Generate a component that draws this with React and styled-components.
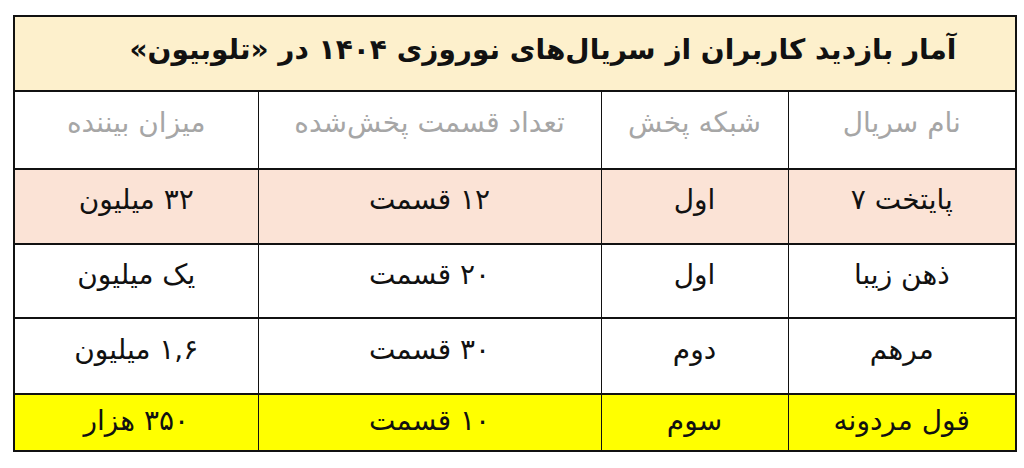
import React from 'react'
import styled, { createGlobalStyle } from 'styled-components'

const Global = createGlobalStyle`
  html, body {
    margin: 0;
    padding: 0;
    background: #ffffff;
  }
  body {
    font-family: "DejaVu Sans", "Noto Sans", sans-serif;
  }
`

const Page = styled.div`
  padding: 15px 7px 0 15px;
  direction: rtl;
`

const Table = styled.table`
  width: 1002px;
  border-collapse: collapse;
  table-layout: fixed;
  border: 2px solid #111;
`

const TitleCell = styled.th`
  box-sizing: border-box;
  height: 75px;
  background: #fdf0cc;
  border-bottom: 2px solid #111;
  font-size: 28px;
  font-weight: bold;
  color: #111;
  text-align: center;
  padding: 0 0 8px 56px;
`

const HeadCell = styled.th`
  box-sizing: border-box;
  height: 78px;
  font-size: 28px;
  font-weight: normal;
  color: #a6a6a6;
  border-left: 1.5px solid #111;
  border-bottom: 2px solid #111;
  text-align: center;
  vertical-align: middle;
  padding: 0 0 16px 0;
`

const Row = styled.tr`
  background: ${p => p.$bg || '#ffffff'};
`

const Cell = styled.td`
  box-sizing: border-box;
  height: ${p => p.$h || 75}px;
  font-size: 28px;
  color: #111;
  border-left: 1.5px solid #111;
  border-bottom: 2px solid #111;
  text-align: center;
  vertical-align: middle;
  padding: 0 0 ${p => p.$pb ?? 14}px 0;
`

const rows = [
  { name: 'پایتخت ۷', net: 'اول', count: '۱۲ قسمت', view: '۳۲ میلیون', bg: '#fbe3d6', h: 75 },
  { name: 'ذهن زیبا', net: 'اول', count: '۲۰ قسمت', view: 'یک میلیون', h: 74 },
  { name: 'مرهم', net: 'دوم', count: '۳۰ قسمت', view: '۱,۶ میلیون', h: 76 },
  { name: 'قول مردونه', net: 'سوم', count: '۱۰ قسمت', view: '۳۵۰ هزار', bg: '#ffff00', h: 57, pb: 4 },
]

export default function App() {
  return (
    <Page>
      <Global />
      <Table>
        <colgroup>
          <col style={{ width: 228 }} />
          <col style={{ width: 187 }} />
          <col style={{ width: 343 }} />
          <col style={{ width: 244 }} />
        </colgroup>
        <thead>
          <tr>
            <TitleCell colSpan={4}>آمار بازدید کاربران از سریال‌های نوروزی ۱۴۰۴ در «تلوبیون»</TitleCell>
          </tr>
          <tr>
            <HeadCell>نام سریال</HeadCell>
            <HeadCell>شبکه پخش</HeadCell>
            <HeadCell>تعداد قسمت پخش‌شده</HeadCell>
            <HeadCell>میزان بیننده</HeadCell>
          </tr>
        </thead>
        <tbody>
          {rows.map(r => (
            <Row key={r.name} $bg={r.bg}>
              <Cell $h={r.h} $pb={r.pb}>{r.name}</Cell>
              <Cell $h={r.h} $pb={r.pb}>{r.net}</Cell>
              <Cell $h={r.h} $pb={r.pb}>{r.count}</Cell>
              <Cell $h={r.h} $pb={r.pb}>{r.view}</Cell>
            </Row>
          ))}
        </tbody>
      </Table>
    </Page>
  )
}
